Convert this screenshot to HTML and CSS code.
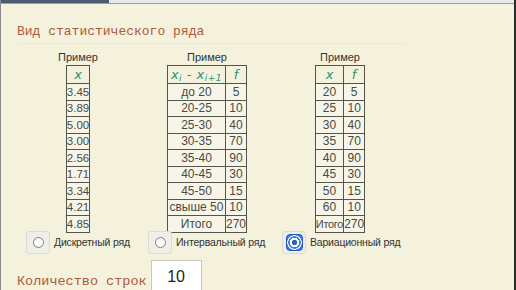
FILE: index.html
```html
<!DOCTYPE html>
<html lang="ru">
<head>
	<meta charset="UTF-8">
	<title>Вид статистического ряда</title>
	<link rel="stylesheet" href="styles.css">
</head>
<body>
	<div class="window">
		<div class="tabs">
			<div class="tab-active"></div>
			<div class="tab-rest"></div>
		</div>
		<div class="panel">
			<div class="caption">Вид статистического ряда</div>
			<div class="examples">
				<div class="example ex-1">
					<div class="ex-title">Пример</div>
					<table class="grid grid-left">
						<tr class="head"><th><i>x</i></th></tr>
						<tr><td>3.45</td></tr>
						<tr><td>3.89</td></tr>
						<tr><td>5.00</td></tr>
						<tr><td>3.00</td></tr>
						<tr><td>2.56</td></tr>
						<tr><td>1.71</td></tr>
						<tr><td>3.34</td></tr>
						<tr><td>4.21</td></tr>
						<tr><td>4.85</td></tr>
					</table>
				</div>
				<div class="example ex-2">
					<div class="ex-title">Пример</div>
					<table class="grid">
						<tr class="head"><th class="c-int"><i>x<sub>i</sub> - x<sub>i+1</sub></i></th><th class="c-f2"><i>f</i></th></tr>
						<tr><td>до 20</td><td>5</td></tr>
						<tr><td>20-25</td><td>10</td></tr>
						<tr><td>25-30</td><td>40</td></tr>
						<tr><td>30-35</td><td>70</td></tr>
						<tr><td>35-40</td><td>90</td></tr>
						<tr><td>40-45</td><td>30</td></tr>
						<tr><td>45-50</td><td>15</td></tr>
						<tr><td>свыше 50</td><td>10</td></tr>
						<tr><td>Итого</td><td>270</td></tr>
					</table>
				</div>
				<div class="example ex-3">
					<div class="ex-title">Пример</div>
					<table class="grid">
						<tr class="head"><th class="c-x3"><i>x</i></th><th class="c-f3"><i>f</i></th></tr>
						<tr><td>20</td><td>5</td></tr>
						<tr><td>25</td><td>10</td></tr>
						<tr><td>30</td><td>40</td></tr>
						<tr><td>35</td><td>70</td></tr>
						<tr><td>40</td><td>90</td></tr>
						<tr><td>45</td><td>30</td></tr>
						<tr><td>50</td><td>15</td></tr>
						<tr><td>60</td><td>10</td></tr>
						<tr><td class="tight">Итого</td><td>270</td></tr>
					</table>
				</div>
			</div>
			<div class="choices">
				<label class="choice ch-1"><span class="radio-box"><span class="radio"></span></span>Дискретный ряд</label>
				<label class="choice ch-2"><span class="radio-box"><span class="radio"></span></span>Интервальный ряд</label>
				<label class="choice ch-3"><span class="radio-box"><span class="radio checked"></span></span>Вариационный ряд</label>
			</div>
			<div class="rows-count">
				<span class="caption">Количество строк</span>
				<div class="count-input">10</div>
			</div>
		</div>
	</div>
</body>
</html>
```

FILE: styles.css
```css
/* reset */
* {
	margin: 0;
	padding: 0;
	box-sizing: border-box;
}
body {
	font-family: Arial, "Liberation Sans", sans-serif;
	background: #f4f2dc;
	width: 516px;
	height: 290px;
	overflow: hidden;
}
.window {
	height: 290px;
	border-left: 1px solid #8a8c94;
	border-right: 2px solid #2a2a2a;
	background: #f4f2dc;
}
.tabs {
	display: flex;
	height: 4px;
	border-bottom: 1px solid #9a9cae;
}
.tab-active {
	width: 108px;
	background: #4b5b72;
}
.tab-rest {
	flex: 1;
	background: #e6e8ee;
}
.panel {
	padding: 20px 0 0 16px;
}
.caption {
	font-family: "Liberation Mono", "Courier New", monospace;
	font-size: 13px;
	line-height: 16px;
	color: #b0573f;
}
.panel > .caption {
	width: 388px;
	padding-bottom: 3px;
	border-bottom: 1px solid #ebe9d4;
}
.examples {
	display: flex;
	margin-top: 7px;
}
.example {
	display: flex;
	flex-direction: column;
	align-items: center;
}
.ex-1 {
	width: 60px;
	margin-left: 31px;
}
.ex-2 {
	width: 80px;
	margin-left: 59px;
}
.ex-3 {
	width: 60px;
	margin-left: 63px;
}
.ex-title {
	font-size: 11px;
	line-height: 13px;
	color: #333;
	margin-bottom: 1px;
}
.grid {
	border-collapse: collapse;
	font-size: 12px;
	color: #4a4a44;
}
.grid td, .grid th {
	border: 1px solid #55554a;
	height: 16.5px;
	padding: 0;
	text-align: center;
	background: #f7f5e8;
	font-weight: normal;
	white-space: nowrap;
}
.grid .head th {
	height: 18px;
	color: #2e8f7c;
	font-family: "DejaVu Sans", sans-serif;
	font-size: 13px;
	background: #f4f2dc;
}
.grid sub {
	font-size: 9px;
	vertical-align: -2px;
}
.grid-left td {
	text-align: left;
	width: 22px;
	font-size: 11.5px;
}
.grid .tight {
	font-size: 11px;
	letter-spacing: -0.3px;
}
.c-int {
	width: 60px;
	letter-spacing: 0.5px;
}
.c-f2 {
	width: 20px;
}
.c-x3 {
	width: 27px;
}
.c-f3 {
	width: 19px;
}
.choices {
	display: flex;
	margin-top: -2px;
}
.choice {
	display: flex;
	align-items: center;
	font-size: 10.5px;
	letter-spacing: -0.2px;
	color: #333;
}
.ch-1 {
	width: 122px;
	margin-left: 9px;
}
.ch-2 {
	width: 134px;
}
.radio-box {
	display: flex;
	align-items: center;
	justify-content: center;
	width: 24px;
	height: 23px;
	margin-right: 4px;
	border: 1px solid #dcdad0;
	border-radius: 3px;
	background: #efeee8;
}
.radio {
	width: 11px;
	height: 11px;
	border: 1px solid #808080;
	border-radius: 50%;
	background: #fbfbf8;
}
.radio.checked {
	width: 17px;
	height: 17px;
	border: 1px solid #2458b8;
	border-radius: 4px;
	background: #3c7ee0 radial-gradient(circle, #2a62c8 0 2.5px, #fff 3px 4.5px, #3c7ee0 5px 6px, #fff 6.5px 7px, transparent 7.5px);
}
.rows-count {
	display: flex;
	align-items: flex-end;
	margin-top: 6px;
}
.rows-count .caption {
	font-size: 13.5px;
	margin-bottom: 2px;
}
.count-input {
	width: 51px;
	height: 32px;
	margin-left: 4px;
	padding-top: 7px;
	border: 1px solid #c8c8c0;
	background: #fff;
	font-size: 16px;
	text-align: center;
	color: #222;
}
```
